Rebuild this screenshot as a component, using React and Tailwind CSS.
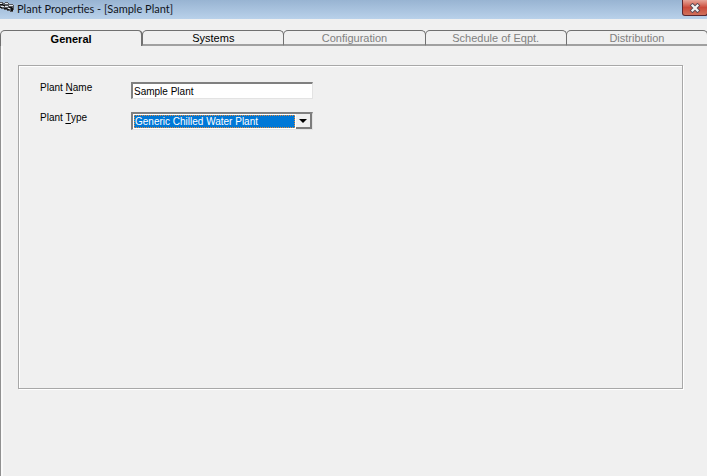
import { useRef, useState } from "react";

const tabs = [
  { name: "General", enabled: true },
  { name: "Systems", enabled: true },
  { name: "Configuration", enabled: false },
  { name: "Schedule of Eqpt.", enabled: false },
  { name: "Distribution", enabled: false },
];

const plantTypes = [
  "Generic Chilled Water Plant",
  "Chiller Plant",
  "Generic Hot Water Plant",
  "Generic Steam Plant",
];

function PlantIcon() {
  return (
    <svg width="14" height="13" viewBox="0 0 14 13" aria-hidden="true">
      <path d="M0 2h3v1h2V2h3v1h1v1h4v1h1v5h-1v2h-3v-1H7v-1H4V9H1V8H0z" fill="#55585e" />
      <path d="M0 3h2v1H0zM5 3h3v1H5zM9 5h4v1H9zM1 6h3v1H1zM5 6h3v1H5zM8 8h2v1H8z" fill="#e2e7ec" />
      <path d="M0 4h3v1H0zM3 5h2v1H3zM4 8h3v1H4zM9 7h3v1H9zM7 9h2v1H7zM11 8h2v3h-2zM0 7h2v1H0z" fill="#111" />
    </svg>
  );
}

function TitleBar({ title }) {
  return (
    <header className="flex h-[19px] items-start justify-between overflow-hidden bg-linear-to-b from-[#98b4d2] to-[#b9d1ea]">
      <div className="flex items-start gap-[3px]">
        <PlantIcon />
        <h1 className="font-['Lato',sans-serif] text-[11px] leading-[18px] text-[#10141c]">{title}</h1>
      </div>
      <button
        type="button"
        aria-label="Close"
        className="-mr-px flex h-4 w-[26px] items-center justify-center rounded-b-[3px] border border-t-0 border-[#5a2730] bg-linear-to-b from-[#e5a499] via-[#c9493a] via-50% to-[#d0705a]"
      >
        <svg width="12" height="10" viewBox="0 0 12 10" aria-hidden="true">
          <path d="M3.500 2.500l5 5M8.500 2.500l-5 5" stroke="#5b4a55" strokeWidth="4" strokeLinecap="square" />
          <path d="M3.500 2.500l5 5M8.500 2.500l-5 5" stroke="#f4f4f4" strokeWidth="2.2" strokeLinecap="square" />
        </svg>
      </button>
    </header>
  );
}

function Tab({ tab, active, onSelect }) {
  return (
    <button
      type="button"
      role="tab"
      aria-selected={active}
      disabled={!tab.enabled}
      onClick={onSelect}
      className={
        "-ml-px min-w-0 flex-1 rounded-t-[5px] border border-b-0 border-[#707070] text-center text-[11px] leading-[14px] first:ml-0 " +
        (active
          ? "border-r-2 font-bold text-black"
          : "border-b-2 border-b-[#a0a0a0] text-black disabled:text-[#808080]")
      }
    >
      {tab.name}
    </button>
  );
}

export default function App() {
  const [active, setActive] = useState("General");
  const [plantName, setPlantName] = useState("Sample Plant");
  const [plantType, setPlantType] = useState(plantTypes[0]);
  const typeRef = useRef(null);

  return (
    <div className="flex min-h-screen flex-col overflow-hidden bg-[#f0f0f0] font-['Liberation_Sans',Arial,sans-serif]">
      <TitleBar title={`Plant Properties - [${plantName}]`} />

      <div role="tablist" className="-mr-px mt-[11px] flex h-4">
        {tabs.map((tab) => (
          <Tab
            key={tab.name}
            tab={tab}
            active={tab.name === active}
            onSelect={() => setActive(tab.name)}
          />
        ))}
      </div>

      <main className="flex flex-1 flex-col border-l border-[#909090] pt-[19px] pr-6 pb-[87px] pl-[17px] shadow-[inset_2px_0_0_#fafafa]">
        <form className="flex-1 border border-[#a8a8a8] px-[21px] pt-[14px] text-[10px] text-black shadow-[1px_1px_0_#fff,inset_1px_1px_0_#fff]">
          <div className="grid grid-cols-[91px_182px] gap-y-[11px]">
            <label htmlFor="plant-name" className="leading-4">
              Plant <u className="underline-offset-2">N</u>ame
            </label>
            <input
              id="plant-name"
              type="text"
              value={plantName}
              onChange={(e) => setPlantName(e.target.value)}
              className="mt-0.5 h-[17px] border-t-2 border-l-2 border-r border-b border-t-[#808080] border-l-[#808080] border-r-[#e3e3e3] border-b-[#e3e3e3] bg-white px-px outline-none"
            />

            <label htmlFor="plant-type" className="leading-4">
              Plant <u className="underline-offset-2">T</u>ype
            </label>
            <div className="mt-0.5 flex h-[18px] border-t-2 border-l-2 border-r border-b border-t-[#808080] border-l-[#808080] border-r-[#e3e3e3] border-b-[#e3e3e3] bg-white">
              <select
                id="plant-type"
                ref={typeRef}
                value={plantType}
                onChange={(e) => setPlantType(e.target.value)}
                className="m-px min-w-0 flex-1 appearance-none border border-dotted border-[#e08a3c] bg-[#0078d7] leading-[11px] text-white outline-none"
              >
                {plantTypes.map((type) => (
                  <option key={type}>{type}</option>
                ))}
              </select>
              <button
                type="button"
                aria-label="Open plant type list"
                onClick={() => typeRef.current.showPicker()}
                className="flex w-4 items-center justify-center border-r-2 border-b-2 border-r-[#7c7c7c] border-b-[#7c7c7c] bg-[#f0f0f0]"
              >
                <svg width="8" height="4" viewBox="0 0 8 4" aria-hidden="true">
                  <path d="M0 0h8L4 4z" fill="#000" />
                </svg>
              </button>
            </div>
          </div>
        </form>
      </main>
    </div>
  );
}
